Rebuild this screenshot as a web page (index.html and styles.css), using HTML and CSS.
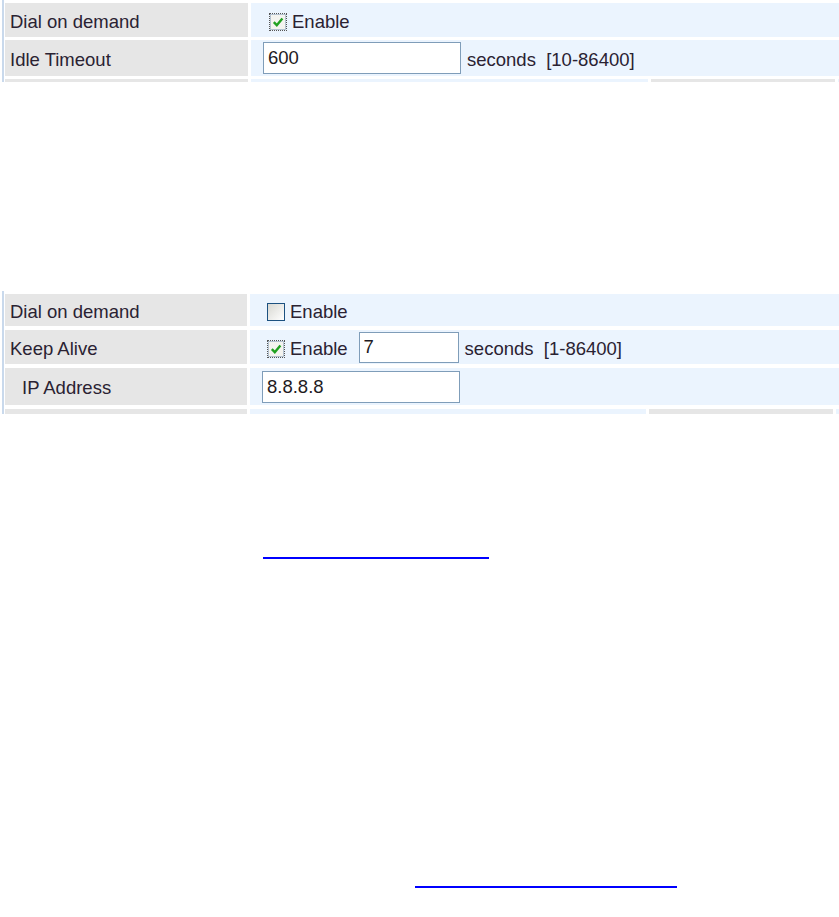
FILE: index.html
```html
<!DOCTYPE html>
<html lang="en">
<head>
    <meta charset="UTF-8">
    <title>WAN Settings</title>
    <link rel="stylesheet" href="styles.css">
</head>
<body>
    <div class="panel first">
        <div class="row h34">
            <div class="label">Dial on demand</div>
            <div class="value pad-check">
                <span class="check checked"><svg viewBox="0 0 16 16" width="16" height="16"><rect x="0.5" y="0.5" width="15" height="15" fill="#f4f4f0" stroke="#b4c2d0"/><path d="M3.8 8.2 L6.8 11.2 L12.4 4.4" fill="none" stroke="#21a121" stroke-width="2.4"/></svg></span>
                <span class="txt">Enable</span>
            </div>
        </div>
        <div class="row h36">
            <div class="label">Idle Timeout</div>
            <div class="value">
                <input class="field wide" type="text" value="600">
                <span class="txt unit">seconds&nbsp; [10-86400]</span>
            </div>
        </div>
        <div class="row tail">
            <div class="label"></div>
            <div class="value"></div>
            <div class="label"></div>
            <div class="value"></div>
        </div>
    </div>

    <div class="panel second">
        <div class="row h32">
            <div class="label">Dial on demand</div>
            <div class="value pad-check">
                <span class="check"></span>
                <span class="txt">Enable</span>
            </div>
        </div>
        <div class="row h34">
            <div class="label">Keep Alive</div>
            <div class="value pad-check">
                <span class="check checked"><svg viewBox="0 0 16 16" width="16" height="16"><rect x="0.5" y="0.5" width="15" height="15" fill="#f4f4f0" stroke="#b4c2d0"/><path d="M3.8 8.2 L6.8 11.2 L12.4 4.4" fill="none" stroke="#21a121" stroke-width="2.4"/></svg></span>
                <span class="txt">Enable</span>
                <input class="field short" type="text" value="7">
                <span class="txt unit">seconds&nbsp; [1-86400]</span>
            </div>
        </div>
        <div class="row h37">
            <div class="label indent">IP Address</div>
            <div class="value">
                <input class="field wide" type="text" value="8.8.8.8">
            </div>
        </div>
        <div class="row tail">
            <div class="label"></div>
            <div class="value"></div>
            <div class="label"></div>
            <div class="value"></div>
        </div>
    </div>

    <a class="line-link one" href="#"></a>
    <a class="line-link two" href="#"></a>
</body>
</html>
```

FILE: styles.css
```css
body {
    margin: 0;
    font-family: "Liberation Sans", Arial, sans-serif;
    font-size: 18.5px;
    color: #2a2232;
    background: #ffffff;
    width: 839px;
}
.panel {
    margin-left: 2px;
    border-left: 2px solid #c9d9ec;
    padding-left: 1px;
    padding-top: 3px;
    display: flex;
    flex-direction: column;
    gap: 3px;
}
.panel.second {
    margin-top: 209px;
    gap: 4px;
}
.row {
    display: grid;
    grid-template-columns: 243px 1fr;
    column-gap: 3px;
}
.second .row {
    grid-template-columns: 242px 1fr;
    column-gap: 3px;
}
.h32 { height: 32px; }
.h34 { height: 34px; }
.h36 { height: 36px; }
.h37 { height: 37px; }
.row.tail {
    height: 3px;
    grid-template-columns: 243px 397px 184px 1fr;
}
.second .row.tail {
    height: 5px;
    grid-template-columns: 242px 396px 184px 1fr;
}
.label {
    background: #e6e6e6;
    display: flex;
    align-items: center;
    padding-left: 5px;
    padding-top: 3px;
}
.label.indent {
    padding-left: 17px;
}
.value {
    background: #ebf4fe;
    display: flex;
    align-items: center;
    padding-left: 12px;
}
.txt {
    padding-top: 4px;
}
.pad-check {
    padding-left: 18px;
}
.second .pad-check {
    padding-left: 17px;
}
.check {
    width: 18px;
    height: 18px;
    box-sizing: border-box;
    margin-top: 3px;
    margin-right: 5px;
    display: inline-flex;
    align-items: center;
    justify-content: center;
    border: 1px solid #1c5180;
    background: linear-gradient(135deg, #d8d8d2, #ffffff);
}
.check.checked {
    border: 1px dotted #555555;
    background: transparent;
}
.check svg {
    display: block;
}
.field {
    font-family: "Liberation Sans", Arial, sans-serif;
    font-size: 18.5px;
    color: #1e1a22;
    border: 1px solid #7f9db9;
    background: #ffffff;
    padding: 0 4px;
    box-sizing: border-box;
    outline: none;
}
.field.wide {
    width: 198px;
    height: 32px;
}
.field.short {
    width: 100px;
    height: 31px;
    margin-left: 11px;
}
.unit {
    margin-left: 6px;
}
.line-link {
    display: block;
    height: 2px;
    background: #0000ff;
}
.line-link.one {
    width: 226px;
    margin-left: 263px;
    margin-top: 143px;
}
.line-link.two {
    width: 262px;
    margin-left: 415px;
    margin-top: 327px;
}
```
